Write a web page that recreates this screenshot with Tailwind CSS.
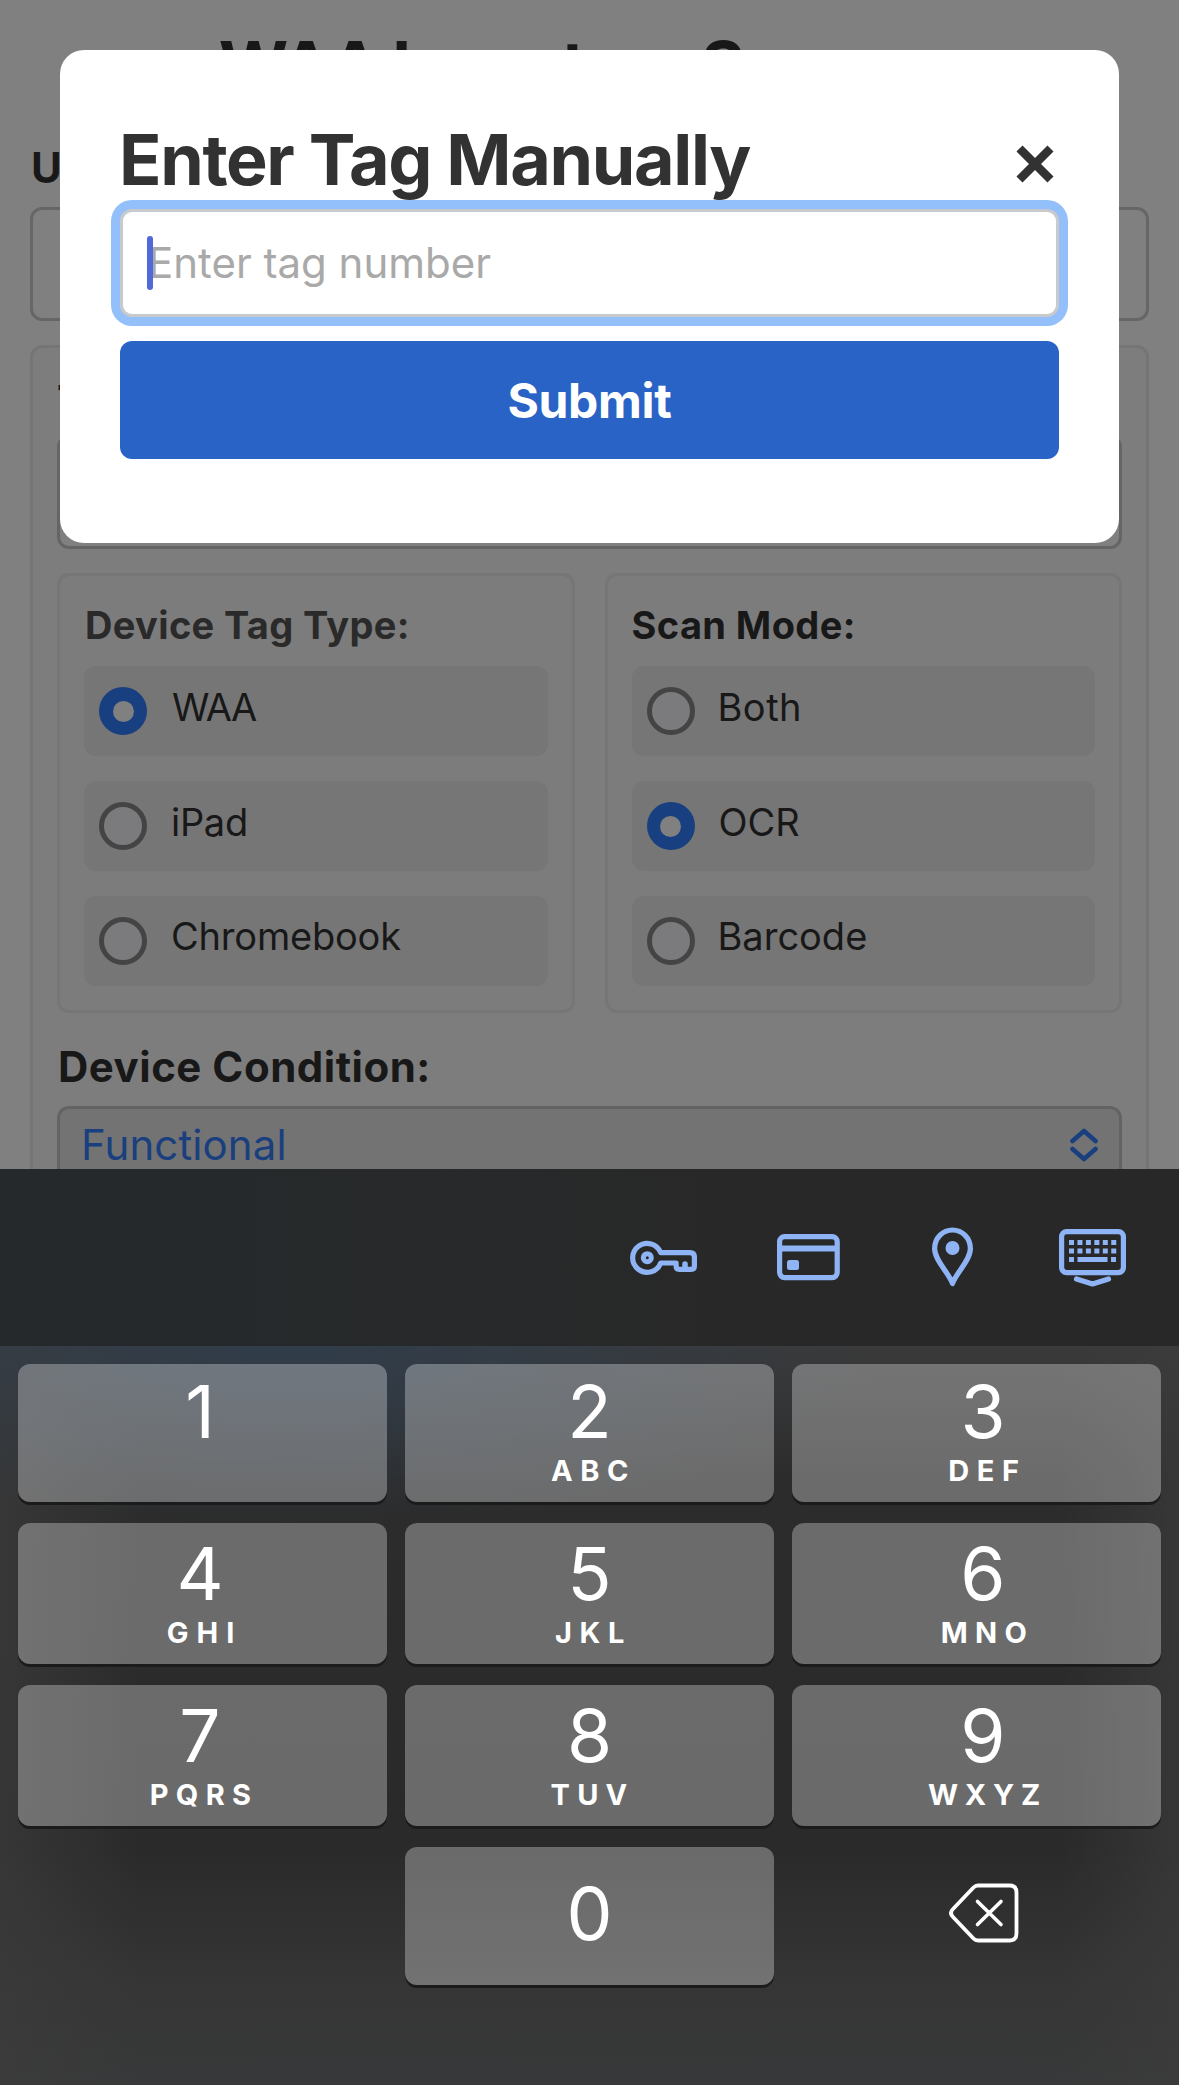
<!DOCTYPE html>
<html lang="en">
<head>
<meta charset="utf-8">
<title>Enter Tag Manually</title>
<script src="https://cdn.jsdelivr.net/npm/@tailwindcss/browser@4"></script>
</head>
<body class="bg-[#808080] font-['Inter',sans-serif]">
<div class="relative h-[2085px] w-[1179px] overflow-hidden bg-[#808080]">

  <!-- Dimmed page -->
  <main class="h-[1169px] overflow-hidden px-[30px] pt-[26px] text-[#181818]">
    <h1 class="whitespace-nowrap text-center text-[67px] leading-[80px] font-bold tracking-[-2.050px]">WAA Inventory Scanner</h1>
    <div class="mt-[42px] pl-px text-[42px] leading-[40px] font-bold">User:</div>
    <div class="mt-[19px] h-[114px] rounded-xl border-[3px] border-[#666]"></div>

    <section class="mt-6 h-[900px] rounded-xl border-[3px] border-[#757575] bg-[#7d7d7d] px-6 pt-[33px]">
      <div class="text-[42px] leading-[40px] font-bold">Tag Number:</div>
      <div class="mt-[14px] h-[114px] rounded-xl border-[3px] border-[#656565] bg-[#808080]"></div>

      <div class="mt-6 grid grid-cols-2 gap-[30px]">
        <fieldset class="h-[440px] rounded-xl border-[3px] border-[#767676] bg-[#7c7c7c] px-6 pt-[29px]">
          <div class="whitespace-nowrap pl-px text-[38px] leading-[40px] font-bold tracking-[0.350px] text-[#2a2a2a]">Device Tag Type:</div>
          <div class="mt-[21px] flex flex-col gap-[25px]">
            <label class="flex h-[90px] items-center gap-[25px] rounded-xl bg-[#767676] pl-[15px]">
              <span class="flex size-12 items-center justify-center rounded-full bg-[#183f80]"><span class="size-[21px] rounded-full bg-[#808080]"></span></span>
              <span class="pb-[9px] text-[38px] leading-[40px] tracking-[-1.5px]">WAA</span>
            </label>
            <label class="flex h-[90px] items-center gap-6 rounded-xl bg-[#767676] pl-[15px]">
              <span class="size-12 rounded-full border-5 border-[#444] bg-[#7b7b7d]"></span>
              <span class="pb-[9px] text-[38px] leading-[40px] tracking-[-0.3px]">iPad</span>
            </label>
            <label class="flex h-[90px] items-center gap-6 rounded-xl bg-[#767676] pl-[15px]">
              <span class="size-12 rounded-full border-5 border-[#444] bg-[#7b7b7d]"></span>
              <span class="pb-[10px] text-[38px] leading-[40px] tracking-[-0.2px]">Chromebook</span>
            </label>
          </div>
        </fieldset>
        <fieldset class="h-[440px] rounded-xl border-[3px] border-[#767676] bg-[#7c7c7c] px-6 pt-[29px]">
          <div class="whitespace-nowrap text-[38px] leading-[40px] font-bold tracking-[0.4px]">Scan Mode:</div>
          <div class="mt-[21px] flex flex-col gap-[25px]">
            <label class="flex h-[90px] items-center gap-[23px] rounded-xl bg-[#767676] pl-[15px]">
              <span class="size-12 rounded-full border-5 border-[#444] bg-[#7b7b7d]"></span>
              <span class="pb-[9px] text-[38px] leading-[40px] tracking-[0.5px]">Both</span>
            </label>
            <label class="flex h-[90px] items-center gap-6 rounded-xl bg-[#767676] pl-[15px]">
              <span class="flex size-12 items-center justify-center rounded-full bg-[#183f80]"><span class="size-[21px] rounded-full bg-[#808080]"></span></span>
              <span class="pb-[9px] text-[38px] leading-[40px]">OCR</span>
            </label>
            <label class="flex h-[90px] items-center gap-[23px] rounded-xl bg-[#767676] pl-[15px]">
              <span class="size-12 rounded-full border-5 border-[#444] bg-[#7b7b7d]"></span>
              <span class="pb-[10px] text-[38px] leading-[40px]">Barcode</span>
            </label>
          </div>
        </fieldset>
      </div>

      <div class="mt-[34px] pl-px text-[42px] leading-[40px] font-bold tracking-[0.5px]">Device Condition:</div>
      <div class="mt-[19px] flex h-[78px] items-center justify-between rounded-xl border-[3px] border-[#636363] bg-[#737373] pr-5 pl-[21px] text-[#1a3f7e]">
        <span class="text-[42px] leading-[40px] tracking-[0.1px]">Functional</span>
        <svg class="h-[34px] w-[30px]" viewBox="0 0 30 34" fill="none" stroke="currentColor" stroke-width="4.6" stroke-linecap="round" stroke-linejoin="round"><path d="M3.5 13 15 3 26.500 13M3.500 21 15 31 26.500 21"/></svg>
      </div>
    </section>
  </main>

  <!-- Modal -->
  <div class="absolute top-[50px] left-[60px] flex h-[493px] w-[1059px] flex-col rounded-3xl bg-white px-[60px] pt-[70px]">
    <div class="flex h-20 items-center justify-between">
      <h2 class="-ml-px whitespace-nowrap text-[70px] leading-[80px] font-bold tracking-[-1.350px] text-[#323232]">Enter Tag Manually</h2>
      <svg class="mt-[8px] mr-[3px] size-[42px]" viewBox="0 0 42 42" fill="none" stroke="#323232" stroke-width="8.5"><path d="M5.500 5.500 36.500 36.500M36.500 5.500 5.500 36.500"/></svg>
    </div>
    <div class="mt-[9px] flex h-[108px] items-center rounded-xl border-[3px] border-[#c8cacd] bg-white pl-[24px] shadow-[0_0_0_9px_#93bffa]">
      <span class="z-10 h-[54px] w-[6px] rounded-full bg-[#5068d8]"></span>
      <span class="-ml-[5px] whitespace-nowrap text-[42px] leading-[50px] text-[#a9a9a9]">Enter tag number</span>
    </div>
    <div class="mt-6 flex h-[118px] items-center justify-center rounded-xl bg-[#2a63c6] pt-[2px] text-[48px] leading-[50px] font-bold tracking-[-0.3px] text-white">Submit</div>
  </div>

  <!-- Keyboard toolbar -->
  <div class="flex h-[177px] items-center justify-end bg-[linear-gradient(to_right,#25292c,#27292a_40%,#282828_60%)] pr-[52px] pb-px text-[#8fb4f5]">
    <svg class="mr-[79px] h-[60px] w-[68px]" viewBox="630 1227 68 60" fill="none" stroke="currentColor" stroke-width="5.200" stroke-linejoin="round">
      <path d="M660.700 1252.700H690q4.400 0 4.400 4.400V1266q0 3.400-3.400 3.400H679.500q-3.400 0-3.400-3.400V1263H660.700A14.500 14.500 0 1 1 660.700 1252.700Z"/>
      <circle cx="647.300" cy="1257.700" r="4" stroke-width="5"/><path d="M685 1269V1264" stroke-linecap="round" stroke-width="5.500"/>
    </svg>
    <svg class="mr-[92px] h-[60px] w-[63px]" viewBox="777 1227 63 60" fill="none" stroke="currentColor" stroke-width="5.200">
      <rect x="779.600" y="1236.600" width="57.600" height="41" rx="5"/><path d="M779 1248.500H838" stroke-width="6"/><rect x="787" y="1260" width="12" height="10" rx="2.500" fill="currentColor" stroke="none"/>
    </svg>
    <svg class="mr-[86px] h-[62px] w-[41px]" viewBox="932 1226 41 62" fill="none" stroke="currentColor" stroke-width="5.200" stroke-linejoin="round">
      <path d="M952.500 1283.500C949 1273 934.600 1260.500 934.600 1248.500A17.900 18.500 0 0 1 970.400 1248.500C970.400 1260.500 956 1273 952.500 1283.500Z"/><circle cx="952.500" cy="1248" r="7" fill="currentColor" stroke="none"/>
    </svg>
    <svg class="h-[60px] w-[68px]" viewBox="1059 1228 68 60" fill="none" stroke="currentColor" stroke-width="5.200">
      <rect x="1061.600" y="1232.600" width="61.800" height="41" rx="5"/>
      <path d="M1069 1243.600H1116.500M1069 1252H1116.500" stroke-width="5" stroke-dasharray="5 3.450"/>
      <path d="M1069 1260.500H1074M1077.500 1260.500H1107.500M1111 1260.500H1116" stroke-width="5"/>
      <path d="M1076.500 1280 1092.500 1285 1108.500 1280" stroke-linecap="round" stroke-linejoin="round"/>
    </svg>
  </div>

  <!-- Number pad -->
  <div class="h-[739px] bg-[radial-gradient(600px_180px_at_290px_0px,#2f3d4ddd,#2f3d4d00),linear-gradient(to_right,#3c3c3caa,#3c3c3c00_12%,#3c3c3c00_90%,#3c3c3caa),linear-gradient(to_bottom,#3a3a3a,#2c2c2c_18%,#2a2a2a_68%,#353535_86%,#38393a)] px-[18px] pt-[18px] text-white">
    <div class="grid grid-cols-3 grid-rows-[138px_141px_141px_138px] gap-x-[18px] gap-y-[21px] text-center">
      <div class="rounded-xl bg-white/30 pt-[17px] pr-[5px] shadow-[0_3px_0_#1b1b1b]"><div class="text-[73px] leading-[61px]">1</div></div>
      <div class="rounded-xl bg-white/30 pt-[17px] shadow-[0_3px_0_#1b1b1b]"><div class="text-[73px] leading-[61px]">2</div><div class="mt-[14px] pl-2 text-[29px] leading-[30px] font-bold tracking-[7.600px]">ABC</div></div>
      <div class="rounded-xl bg-white/30 pt-[17px] pl-[13px] shadow-[0_3px_0_#1b1b1b]"><div class="text-[73px] leading-[61px]">3</div><div class="mt-[14px] pl-[9px] text-[29px] leading-[30px] font-bold tracking-[7.600px]">DEF</div></div>
      <div class="rounded-xl bg-white/30 pt-5 pr-[5px] shadow-[0_3px_0_#1b1b1b]"><div class="text-[73px] leading-[61px]">4</div><div class="mt-[14px] pl-[9px] text-[29px] leading-[30px] font-bold tracking-[8px]">GHI</div></div>
      <div class="rounded-xl bg-white/30 pt-5 shadow-[0_3px_0_#1b1b1b]"><div class="text-[73px] leading-[61px]">5</div><div class="mt-[14px] pl-2 text-[29px] leading-[30px] font-bold tracking-[7.600px]">JKL</div></div>
      <div class="rounded-xl bg-white/30 pt-5 pl-[13px] shadow-[0_3px_0_#1b1b1b]"><div class="text-[73px] leading-[61px]">6</div><div class="mt-[14px] pl-[9px] text-[29px] leading-[30px] font-bold tracking-[7.400px]">MNO</div></div>
      <div class="rounded-xl bg-white/30 pt-5 pr-[5px] shadow-[0_3px_0_#1b1b1b]"><div class="text-[73px] leading-[61px]">7</div><div class="mt-[14px] pl-2 text-[29px] leading-[30px] font-bold tracking-[7.300px]">PQRS</div></div>
      <div class="rounded-xl bg-white/30 pt-5 shadow-[0_3px_0_#1b1b1b]"><div class="text-[73px] leading-[61px]">8</div><div class="mt-[14px] pl-[6px] text-[29px] leading-[30px] font-bold tracking-[7.200px]">TUV</div></div>
      <div class="rounded-xl bg-white/30 pt-5 pl-[13px] shadow-[0_3px_0_#1b1b1b]"><div class="text-[73px] leading-[61px]">9</div><div class="mt-[14px] pl-[9px] text-[29px] leading-[30px] font-bold tracking-[6.800px]">WXYZ</div></div>
      <div></div>
      <div class="rounded-xl bg-white/30 pt-9 shadow-[0_3px_0_#1b1b1b]"><div class="text-[73px] leading-[61px]">0</div></div>
      <div class="flex items-center justify-center pb-[7px] pl-[15px]">
        <svg class="h-[60px] w-[70px]" viewBox="0 0 70 60" fill="none" stroke="currentColor" stroke-width="3.800" stroke-linecap="round" stroke-linejoin="round"><path d="M29 2.500H60.500Q67.500 2.500 67.500 9.500V50.500Q67.500 57.500 60.500 57.500H29Q26.500 57.500 24.500 55.500L4 34Q0 30 4 26L24.500 4.500Q26.500 2.500 29 2.500Z"/><path d="M28.500 18.500 52 41.500M52 18.500 28.500 41.500" stroke-width="3.600"/></svg>
      </div>
    </div>
  </div>
</div>
</body>
</html>
